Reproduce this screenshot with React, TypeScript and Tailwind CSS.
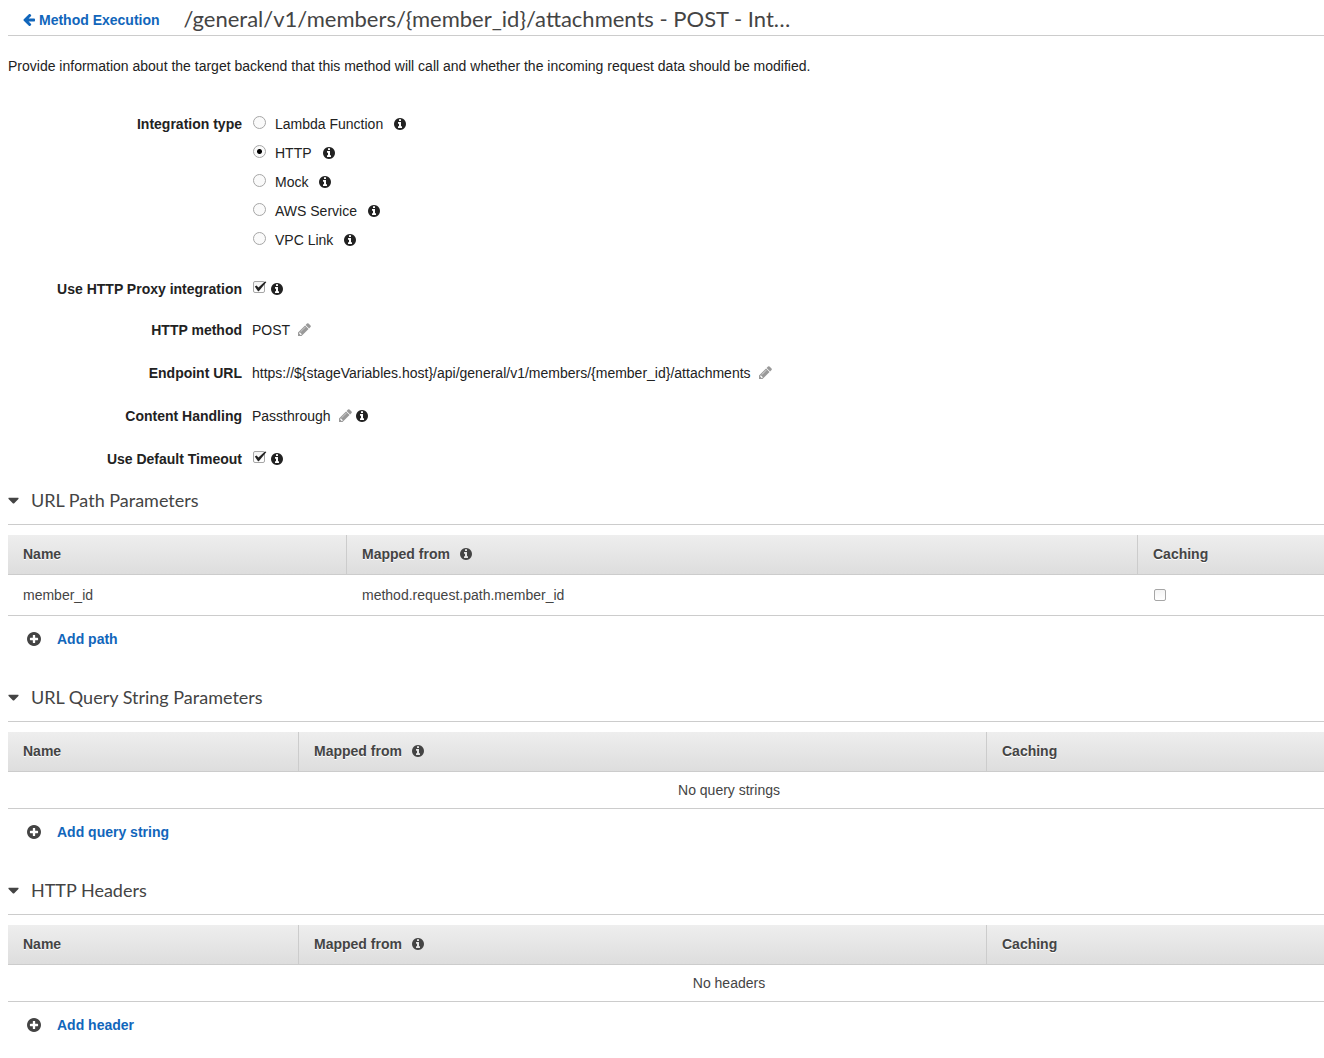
import { useState, type ReactNode } from "react";
import { FaCaretDown, FaCaretRight } from "react-icons/fa";

const integrationTypes = ["Lambda Function", "HTTP", "Mock", "AWS Service", "VPC Link"];

type Mapping = {
  name: string;
  mappedFrom: string;
};

type ParameterSectionProps = {
  title: string;
  addLabel: string;
  emptyLabel: string;
  rows: Mapping[];
};

function Info() {
  return (
    <svg viewBox="128 128 1536 1536" fill="currentColor" aria-hidden="true" className="h-3 w-3 shrink-0">
      <path d="M1152 1376v-160q0-14-9-23t-23-9h-96v-512q0-14-9-23t-23-9h-320q-14 0-23 9t-9 23v160q0 14 9 23t23 9h96v320h-96q-14 0-23 9t-9 23v160q0 14 9 23t23 9h448q14 0 23-9t9-23zM1024 480v-160q0-14-9-23t-23-9h-192q-14 0-23 9t-9 23v160q0 14 9 23t23 9h192q14 0 23-9t9-23zM1664 896q0 209-103 385.5t-279.5 279.5-385.5 103-385.5-103-279.5-279.5-103-385.5 103-385.5 279.5-279.5 385.5-103 385.5 103 279.5 279.5 103 385.5z" />
    </svg>
  );
}

function BackArrow() {
  return (
    <svg viewBox="128 192 1536 1536" fill="currentColor" aria-hidden="true" className="h-3 w-3 shrink-0">
      <path d="M1664 896v128q0 53-32.5 90.5t-84.5 37.5h-704l293 294q38 36 38 90t-38 90l-75 76q-37 37-90 37-52 0-91-37l-651-652q-37-37-37-90 0-52 37-91l651-650q38-38 91-38 52 0 90 38l75 74q38 38 38 91t-38 91l-293 293h704q52 0 84.5 37.5t32.5 90.5z" />
    </svg>
  );
}

function PlusCircle() {
  return (
    <svg viewBox="128 128 1536 1536" fill="currentColor" aria-hidden="true" className="h-[14px] w-[14px] shrink-0">
      <path d="M1344 960v-128q0-26-19-45t-45-19h-256v-256q0-26-19-45t-45-19h-128q-26 0-45 19t-19 45v256h-256q-26 0-45 19t-19 45v128q0 26 19 45t45 19h256v256q0 26 19 45t45 19h128q26 0 45-19t19-45v-256h256q26 0 45-19t19-45zM1664 896q0 209-103 385.5t-279.5 279.5-385.5 103-385.5-103-279.5-279.5-103-385.5 103-385.5 279.5-279.5 385.5-103 385.5 103 279.5 279.5 103 385.5z" />
    </svg>
  );
}

function EditButton({ label }: { label: string }) {
  return (
    <button type="button" aria-label={label} className="cursor-pointer text-[#999]">
      <svg viewBox="128 128 1536 1536" fill="currentColor" aria-hidden="true" className="h-[13px] w-[13px]">
        <path d="M491 1536l91-91-235-235-91 91v107h128v128h107zm523-928q0-22-22-22-10 0-17 7l-542 542q-7 7-7 17 0 22 22 22 10 0 17-7l542-542q7-7 7-17zm-54-192l416 416-832 832h-416v-416zm683 96q0 53-37 90l-166 166-416-416 166-165q36-38 90-38 53 0 91 38l235 234q37 39 37 91z" />
      </svg>
    </button>
  );
}

function Checkbox({ id, label, defaultChecked }: { id: string; label?: string; defaultChecked?: boolean }) {
  return (
    <span className="relative flex h-3 w-[13px] shrink-0">
      <input
        id={id}
        type="checkbox"
        aria-label={label}
        defaultChecked={defaultChecked}
        className="peer h-3 w-3 appearance-none rounded-[2px] border border-[#a6a6a6] bg-linear-to-b from-[#f4f4f4] to-white"
      />
      <svg
        viewBox="0 0 14 12"
        className="pointer-events-none absolute top-0 left-0 hidden h-3 w-[14px] peer-checked:block"
      >
        <path d="M1.8 5.4 L3.6 4.4 L5.4 6.6 L12 0.6 L13.4 1 L5.8 10.2 L5 10.2 Z" fill="#222" />
      </svg>
    </span>
  );
}

function FormRow({ label, htmlFor, children }: { label: string; htmlFor?: string; children: ReactNode }) {
  return (
    <div className="flex h-[43px] items-center gap-[10px]">
      {htmlFor ? (
        <label htmlFor={htmlFor} className="w-[234px] shrink-0 text-right font-bold">
          {label}
        </label>
      ) : (
        <span className="w-[234px] shrink-0 text-right font-bold">{label}</span>
      )}
      {children}
    </div>
  );
}

function ParameterSection({ title, addLabel, emptyLabel, rows }: ParameterSectionProps) {
  const [open, setOpen] = useState(true);
  const hasRows = rows.length > 0;

  return (
    <section className="mb-[15px] text-[#444]">
      <h2 className="flex h-[45px] items-center border-b border-[#ccc] pb-1 font-[Lato,sans-serif] text-lg">
        <button
          type="button"
          aria-expanded={open}
          onClick={() => setOpen(!open)}
          className="flex cursor-pointer items-center gap-3"
        >
          {open ? (
            <FaCaretDown className="h-[18px] w-[11px]" />
          ) : (
            <FaCaretRight className="h-[18px] w-[11px]" />
          )}
          {title}
        </button>
      </h2>
      {open ? (
        <>
          <table className="mt-[10px] w-full table-fixed border-separate border-spacing-0 text-left">
            <thead className="bg-linear-to-b from-[#eee] to-[#ddd]">
              <tr className="h-10 [text-shadow:0_1px_0_#fff]">
                <th className={`border-r border-b border-[#ccc] px-[15px] pb-0.5 ${hasRows ? "w-[339px]" : "w-[291px]"}`}>
                  Name
                </th>
                <th className="border-r border-b border-[#ccc] px-[15px] pb-0.5">
                  <span className="flex items-center gap-[10px]">
                    Mapped from
                    <Info />
                  </span>
                </th>
                <th className={`border-b border-[#ccc] px-[15px] pb-0.5 ${hasRows ? "w-[186px]" : "w-[337px]"}`}>
                  Caching
                </th>
              </tr>
            </thead>
            <tbody>
              {rows.map((row) => (
                <tr key={row.name} className="h-[41px]">
                  <td className="border-b border-[#ccc] px-[15px]">{row.name}</td>
                  <td className="border-b border-[#ccc] px-[15px]">{row.mappedFrom}</td>
                  <td className="border-b border-[#ccc] px-4">
                    <Checkbox id={`caching-${row.name}`} label={`Caching for ${row.name}`} />
                  </td>
                </tr>
              ))}
              {hasRows ? null : (
                <tr className="h-[37px]">
                  <td colSpan={3} className="border-b border-[#ccc] pl-[126px] text-center">
                    {emptyLabel}
                  </td>
                </tr>
              )}
            </tbody>
          </table>
          <button type="button" className="ml-[19px] flex h-[46px] cursor-pointer items-center gap-4 font-bold">
            <PlusCircle />
            <span className="text-[#1166bb]">{addLabel}</span>
          </button>
        </>
      ) : null}
    </section>
  );
}

export default function App() {
  const [integrationType, setIntegrationType] = useState("HTTP");

  return (
    <main className="bg-white pl-2 font-['Liberation_Sans',Arial,sans-serif] text-sm text-[#222]">
      <header className="flex h-9 items-center gap-6 border-b border-[#ccc] pt-1 pl-[15px]">
        <a href="#method-execution" className="flex shrink-0 items-center gap-1 font-bold text-[#1166bb]">
          <BackArrow />
          Method Execution
        </a>
        <h1 className="truncate pb-0.5 font-[Lato,sans-serif] text-[22px] text-[#444]">
          /general/v1/members/&#123;member_id&#125;/attachments - POST - Int…
        </h1>
      </header>

      <p className="mt-5">
        Provide information about the target backend that this method will call and whether the incoming request data
        should be modified.
      </p>

      <form className="mt-[33px]">
        <div role="radiogroup" aria-labelledby="integration-type" className="mb-[13px] flex gap-[10px]">
          <span id="integration-type" className="w-[234px] shrink-0 text-right leading-[30px] font-bold">
            Integration type
          </span>
          <div>
            {integrationTypes.map((type) => (
              <div key={type} className="flex h-[29px] items-center gap-[11px]">
                <label className="flex items-center gap-[9px] pl-px">
                  <input
                    type="radio"
                    name="integration-type"
                    value={type}
                    checked={integrationType === type}
                    onChange={() => setIntegrationType(type)}
                    className="mb-[3px] h-[13px] w-[13px] appearance-none rounded-full border border-[#a6a6a6] bg-[#fafafa] checked:bg-[radial-gradient(circle,#000_2px,#fafafa_3px)]"
                  />
                  {type}
                </label>
                <Info />
              </div>
            ))}
          </div>
        </div>

        <div className="-mb-0.5">
          <FormRow label="Use HTTP Proxy integration" htmlFor="http-proxy">
            <span className="flex items-center gap-[5px]">
              <span className="mb-1 pl-px">
                <Checkbox id="http-proxy" defaultChecked />
              </span>
              <Info />
            </span>
          </FormRow>
        </div>
        <FormRow label="HTTP method">
          <span className="flex items-center gap-2">
            POST
            <EditButton label="Edit HTTP method" />
          </span>
        </FormRow>
        <FormRow label="Endpoint URL">
          <span className="flex items-center gap-2">
            {"https://${stageVariables.host}/api/general/v1/members/{member_id}/attachments"}
            <EditButton label="Edit endpoint URL" />
          </span>
        </FormRow>
        <FormRow label="Content Handling">
          <span className="flex items-center gap-2">
            Passthrough
            <span className="flex items-center gap-1">
              <EditButton label="Edit content handling" />
              <Info />
            </span>
          </span>
        </FormRow>
        <FormRow label="Use Default Timeout" htmlFor="default-timeout">
          <span className="flex items-center gap-[5px]">
            <span className="mb-1 pl-px">
              <Checkbox id="default-timeout" defaultChecked />
            </span>
            <Info />
          </span>
        </FormRow>
      </form>

      <ParameterSection
        title="URL Path Parameters"
        addLabel="Add path"
        emptyLabel="No paths"
        rows={[{ name: "member_id", mappedFrom: "method.request.path.member_id" }]}
      />
      <ParameterSection
        title="URL Query String Parameters"
        addLabel="Add query string"
        emptyLabel="No query strings"
        rows={[]}
      />
      <ParameterSection title="HTTP Headers" addLabel="Add header" emptyLabel="No headers" rows={[]} />
    </main>
  );
}
